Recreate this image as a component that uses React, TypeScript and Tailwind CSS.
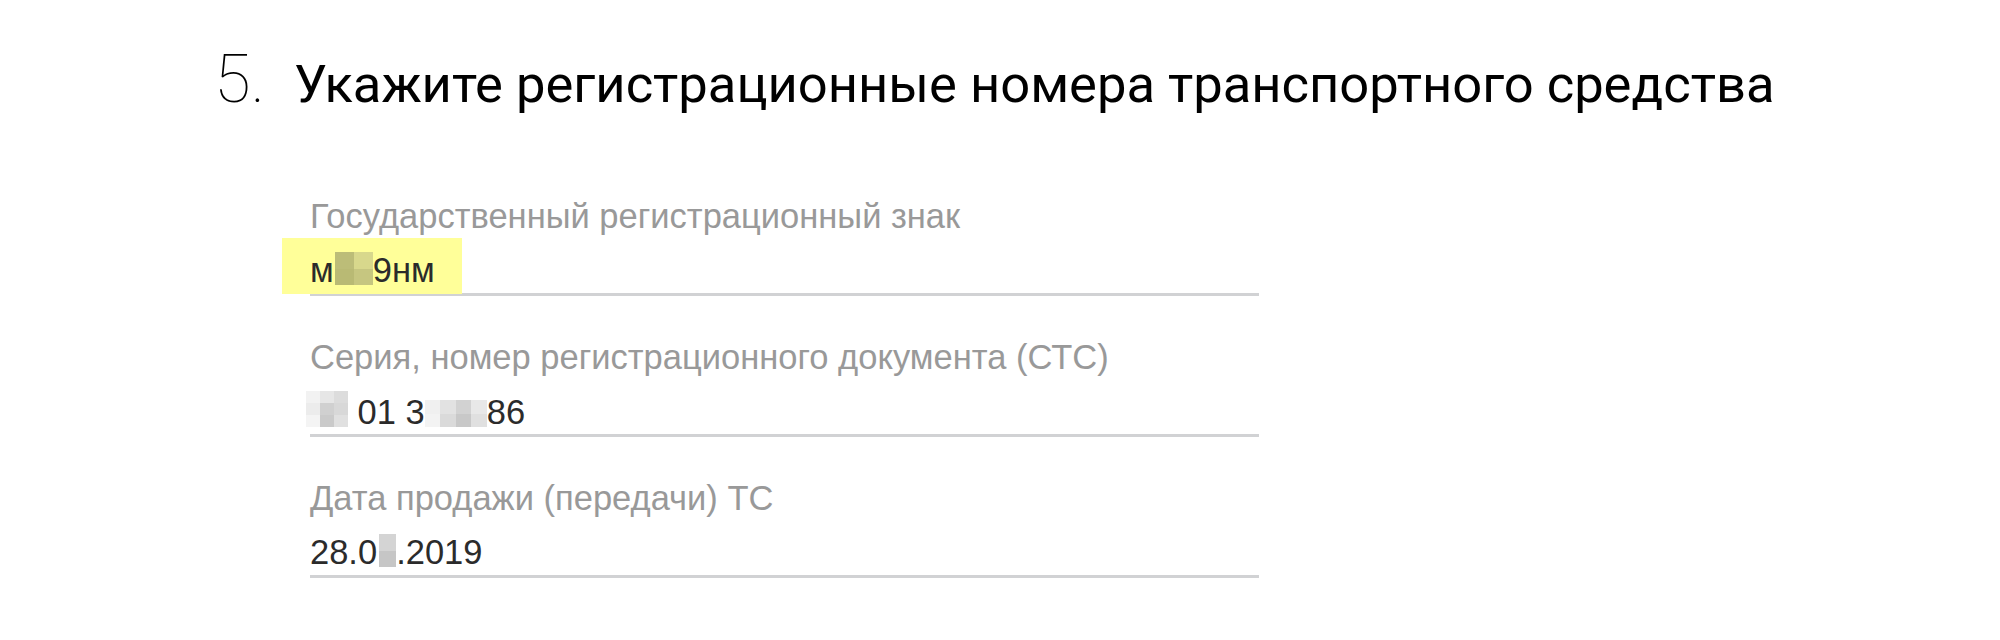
import React from "react";

const Mosaic = ({
  cols,
  rows,
  cells,
  w,
  h,
  cls,
}: {
  cols: number;
  rows: number;
  cells: string[];
  w: number;
  h: number;
  cls?: string;
}) => (
  <span
    className={`inline-block overflow-hidden align-[-3px] ${cls ?? ""}`}
    style={{ width: `${w}px`, height: `${h}px` }}
  >
    <span
      className="grid w-full h-full"
      style={{ gridTemplateColumns: `repeat(${cols}, 1fr)`, gridTemplateRows: `repeat(${rows}, 1fr)` }}
    >
      {cells.map((c, i) => (
        <span key={i} style={{ background: c }} />
      ))}
    </span>
  </span>
);

const Row = ({ label, children }: { label: string; children: React.ReactNode }) => (
  <div className="flex flex-col">
    <div className="text-[34.5px] leading-[40px] text-[#999999] font-['Liberation_Sans',Arial,sans-serif] whitespace-nowrap">
      {label}
    </div>
    <div className="mt-[14px] h-[46px] border-b-[3px] border-[#d1d2d4] text-[34.5px] leading-[40px] text-[#2b2b2b] font-['Liberation_Sans',Arial,sans-serif] whitespace-nowrap">
      {children}
    </div>
  </div>
);

export default function App() {
  return (
    <div className="w-[2000px] h-[640px] bg-white overflow-hidden">
      <div className="pt-[47px] pl-[214px] flex items-baseline font-['Roboto',sans-serif] text-black whitespace-nowrap">
        <span className="text-[67px] font-thin leading-[64px] mr-[29px]">5.</span>
        <span className="text-[52.5px] font-normal leading-[64px]">Укажите регистрационные номера транспортного средства</span>
      </div>
      <div className="ml-[310px] w-[949px] mt-[80px] flex flex-col gap-[41px]">
        <Row label="Государственный регистрационный знак">
          <span className="inline-block bg-[#ffff99] -ml-[28px] pl-[28px] pr-[27px] pt-[12px] pb-[4px] -mt-[12px] -mb-[4px]">
            м
            <Mosaic
              cols={2}
              rows={2}
              w={38}
              h={33}
              cls="ml-[1px] align-[-2px]"
              cells={["#bcbd78", "#d8d88c", "#b9ba74", "#c6c680"]}
            />
            9нм
          </span>
        </Row>
        <Row label="Серия, номер регистрационного документа (СТС)">
          <Mosaic
            cols={3}
            rows={3}
            w={42}
            h={36}
            cls="-ml-[4px]"
            cells={["#f2f2f2", "#e6e6e6", "#dcdcdc", "#ececec", "#d0d0d0", "#d8d8d8", "#f4f4f4", "#cacaca", "#e0e0e0"]}
          />
          {" 01 3"}
          <Mosaic
            cols={4}
            rows={2}
            w={62}
            h={27}
            cells={["#f0f0f0", "#e2e2e2", "#d2d2d2", "#e8e8e8", "#f3f3f3", "#dadada", "#c8c8c8", "#e0e0e0"]}
          />
          86
        </Row>
        <Row label="Дата продажи (передачи) ТС">
          28.0
          <Mosaic cols={1} rows={2} w={17} h={33} cls="ml-[2px]" cells={["#d4d4d4", "#c6c6c6"]} />
          .2019
        </Row>
      </div>
    </div>
  );
}
